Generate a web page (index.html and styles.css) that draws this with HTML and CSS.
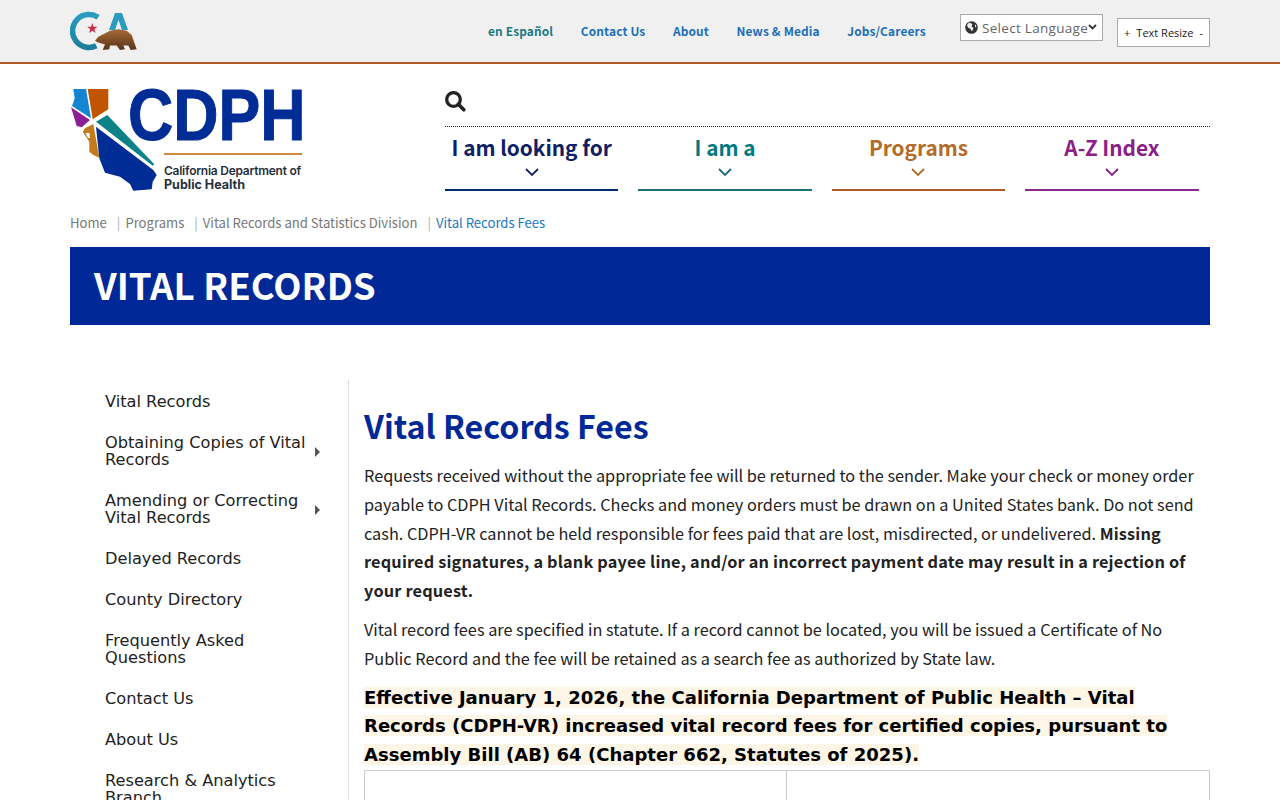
FILE: index.html
```html
<!DOCTYPE html>
<html lang="en">
<head>
<meta charset="utf-8">
<title>Vital Records Fees</title>
<link rel="stylesheet" href="styles.css">
</head>
<body>
<header class="topbar">
  <div class="wrap topbar-in">
    <a class="ca-logo" href="#" aria-label="CA">
      <svg width="68" height="40" viewBox="0 0 68 40">
        <defs>
          <linearGradient id="bear" x1="0" y1="0" x2="0" y2="1"><stop offset="0" stop-color="#a66a38"/><stop offset="1" stop-color="#5a3418"/></linearGradient>
          <linearGradient id="cblue" x1="0" y1="0" x2="0" y2="1"><stop offset="0" stop-color="#2b9cc0"/><stop offset="1" stop-color="#1c7f9c"/></linearGradient>
        </defs>
        <path d="M28.200 6.300A16.500 16.500 0 1 0 26.300 34.800" fill="none" stroke="url(#cblue)" stroke-width="5.500"/>
        <path d="M45 2h7l6 17h-6l-3.500-10-3.500 10h-6z" fill="#2b9cc0"/>
        <path d="M22.300 12l1.300 3.700 3.800.1-3 2.400 1.100 3.700-3.200-2.200-3.200 2.200 1.100-3.700-3-2.400 3.800-.1z" fill="#c8304a"/>
        <path d="M25 29.700 28.300 25.700 33.300 23.300 40 19.700 48.300 18.300 56.700 19.700 61.700 24 64 30.700 66.700 38.300 60.700 39 58.300 34.500 53.300 34.500 55 38.300 50 39 46.700 34.500 40 34.500 39.300 38.300 32.700 39 35 33.500 28.300 31.500z" fill="url(#bear)"/>
      </svg>
    </a>
    <nav class="utility">
      <a class="es" href="#">en Español</a>
      <a href="#">Contact Us</a>
      <a href="#">About</a>
      <a href="#">News &amp; Media</a>
      <a href="#">Jobs/Careers</a>
    </nav>
    <div class="lang">
      <svg class="globe" width="13" height="13" viewBox="0 0 13 13"><circle cx="6.500" cy="6.500" r="6.300" fill="#333"/><path d="M4 1.500 7.500 3 6.500 5.500 8.500 7 7 10.500 5.500 8 3 6.500 2 4zM10 3l1.500 2.500-1.500 1z" fill="#f0f0f0"/></svg>
      <span class="lang-t">Select Language</span>
      <svg class="lang-c" width="9" height="6" viewBox="0 0 9 6"><path d="M1 1l3.500 3.500L8 1" fill="none" stroke="#333" stroke-width="1.800"/></svg>
    </div>
    <div class="resize"><span>+</span><span class="resize-t">Text Resize</span><span>-</span></div>
  </div>
</header>

<div class="wrap brand">
  <a class="cdph" href="#">
    <svg class="map" width="88" height="106" viewBox="0 0 88 106">
      <path d="M3.300 2H16L21 31.300 2 19 4.700 11.300z" fill="#1485d2"/>
      <path d="M17.700 2H38.300V22.300L22.700 32.300z" fill="#c05400"/>
      <path d="M1 20.300 20 33 11.700 40.300 6.700 39z" fill="#8b1f96"/>
      <path d="M26 34.700 37.300 28 84.300 77.300 82.700 78.700z" fill="#0c8288"/>
      <path d="M23.300 37 29.300 70.700 23.300 68 19.300 64.700 19.300 54.700 12.700 44.700 15 41.300z" fill="#c57a1a"/>
      <path d="M15.500 46h4l.5 5h-2z" fill="#fff"/>
      <path d="M26 39.700 83.300 83 86.700 88 82.700 94.700 81.700 102.300 63.300 103.700 60 97 50 89.700 35 85.700 29.300 71.300z" fill="#002c96"/>
    </svg>
    <div class="cdph-text">
      <div class="cdph-name">CDPH</div>
      <div class="cdph-rule"></div>
      <div class="cdph-full">California Department of</div>
      <div class="cdph-full2">Public Health</div>
    </div>
  </a>
  <div class="mainnav">
    <div class="searchrow">
      <svg width="21" height="21" viewBox="0 0 21 21"><circle cx="8.500" cy="8.500" r="6.800" fill="none" stroke="#222" stroke-width="3.300"/><path d="M13.300 13.300 18.800 18.800" stroke="#222" stroke-width="3.600" stroke-linecap="round"/></svg>
    </div>
    <div class="tabs">
      <a class="tab tab-navy" href="#"><span class="tab-t">I am looking for</span><svg width="14" height="9" viewBox="0 0 14 9"><path d="M1 1l6 6 6-6" fill="none" stroke="currentColor" stroke-width="1.800"/></svg></a>
      <a class="tab tab-teal" href="#"><span class="tab-t">I am a</span><svg width="14" height="9" viewBox="0 0 14 9"><path d="M1 1l6 6 6-6" fill="none" stroke="currentColor" stroke-width="1.800"/></svg></a>
      <a class="tab tab-orange" href="#"><span class="tab-t">Programs</span><svg width="14" height="9" viewBox="0 0 14 9"><path d="M1 1l6 6 6-6" fill="none" stroke="currentColor" stroke-width="1.800"/></svg></a>
      <a class="tab tab-purple" href="#"><span class="tab-t">A-Z Index</span><svg width="14" height="9" viewBox="0 0 14 9"><path d="M1 1l6 6 6-6" fill="none" stroke="currentColor" stroke-width="1.800"/></svg></a>
    </div>
  </div>
</div>

<div class="wrap crumbs">
  <a href="#">Home</a><i>|</i><a href="#">Programs</a><i>|</i><a href="#">Vital Records and Statistics Division</a><i>|</i><a class="cur" href="#">Vital Records Fees</a>
</div>

<div class="wrap">
  <div class="banner">VITAL RECORDS</div>
</div>

<div class="wrap cols">
  <aside class="side">
    <a href="#">Vital Records</a>
    <a class="more" href="#">Obtaining Copies of Vital Records</a>
    <a class="more" href="#">Amending or Correcting Vital Records</a>
    <a href="#">Delayed Records</a>
    <a href="#">County Directory</a>
    <a href="#">Frequently Asked Questions</a>
    <a href="#">Contact Us</a>
    <a href="#">About Us</a>
    <a href="#">Research &amp; Analytics Branch</a>
  </aside>
  <main class="content">
    <h1>Vital Records Fees</h1>
    <p>Requests received without the appropriate fee will be returned to the sender. Make your check or money order payable to CDPH Vital Records. Checks and money orders must be drawn on a United States bank. Do not send cash. CDPH-VR cannot be held responsible for fees paid that are lost, misdirected, or undelivered. <strong>Missing required signatures, a blank payee line, and/or an incorrect payment date may result in a rejection of your request.</strong></p>
    <p class="second">Vital record fees are specified in statute. If a record cannot be located, you will be issued a Certificate of No Public Record and the fee will be retained as a search fee as authorized by State law.</p>
    <p class="notice"><mark>Effective January 1, 2026, the California Department of Public Health – Vital Records (CDPH-VR) increased vital record fees for certified copies, pursuant to Assembly Bill (AB) 64 (Chapter 662, Statutes of 2025).</mark></p>
    <table class="fees"><tr><td class="fee-l"></td><td></td></tr></table>
  </main>
</div>
</body>
</html>
```
FILE: styles.css
```css
* { box-sizing: border-box; }
html, body { margin: 0; height: 800px; overflow: hidden; background: #fff; }
body { font-family: "Noto Sans CJK SC", "Noto Sans", sans-serif; color: #222; }
a { text-decoration: none; color: inherit; }
.wrap { width: 1140px; margin: 0 auto; }

.topbar { height: 64px; background: #f0f0f0; border-bottom: 2px solid #b05a27; }
.topbar-in { display: flex; align-items: flex-start; height: 62px; position: relative; }
.ca-logo { display: block; margin-top: 11px; height: 40px; }
.utility { display: flex; gap: 27.500px; margin-left: 350px; margin-top: 21px; font-size: 11.900px; letter-spacing: 0.150px; line-height: 19px; font-weight: 700; color: #1c6fb9; white-space: nowrap; }
.utility .es { color: #1a7a80; }
.lang { flex: none; width: 143px; height: 27px; margin-left: auto; margin-top: 14px; border: 1px solid #aaa; background: #fff; display: flex; align-items: center; padding-left: 4px; position: relative; color: #666; }
.lang-t { font-family: "Open Sans", sans-serif; font-size: 13.500px; letter-spacing: 0.300px; margin-left: 4px; white-space: nowrap; }
.lang-c { position: absolute; right: 5px; top: 9px; }
.resize { flex: none; width: 93px; height: 29px; margin-left: 14px; margin-top: 18px; border: 1px solid #aaa; background: #fff; display: flex; align-items: center; justify-content: space-between; padding: 0 6px; font-family: "Open Sans", sans-serif; font-size: 11px; color: #222; white-space: nowrap; }

.brand { display: flex; height: 127px; }
.cdph { display: flex; width: 375px; padding-top: 23px; }
.map { flex: none; }
.cdph-text { margin-left: -28px; }
.cdph-name { font-family: "Liberation Sans", sans-serif; font-weight: 700; font-size: 72px; line-height: 56px; color: #002c96; -webkit-text-stroke: 1px #002c96; height: 56px; width: 180px; margin-left: -2px; white-space: nowrap; transform: scaleX(0.87); transform-origin: 0 0; }
.cdph-rule { width: 138px; height: 2px; background: #d08a3c; margin: 10px 0 0 34px; }
.cdph-full, .cdph-full2 { font-family: "Inter", sans-serif; font-size: 12px; line-height: 14px; font-weight: 600; color: #26303c; margin-left: 34px; white-space: nowrap; letter-spacing: -0.250px; }
.cdph-full { margin-top: 9px; }
.cdph-full2 { font-size: 12.500px; font-weight: 700; letter-spacing: 0; }

.mainnav { width: 765px; }
.searchrow { height: 63px; padding-top: 27px; border-bottom: 1px dotted #222; }
.tabs { display: flex; gap: 20px; }
.tab { width: 173.400px; height: 64px; display: flex; flex-direction: column; align-items: center; border-bottom: 2px solid currentColor; font-weight: 700; }
.tab-t { font-size: 20.800px; line-height: 40px; height: 41px; white-space: nowrap; }
.tab-navy { color: #0f2066; border-color: #002c6f; }
.tab-navy svg { color: #12235f; }
.tab-teal { color: #007a80; border-color: #1a7278; }
.tab-teal svg { color: #1a6a78; }
.tab-orange { color: #b36c29; border-color: #b05a27; }
.tab-purple { color: #8b2089; border-color: #8b2a8d; }

.crumbs { height: 56px; padding-top: 22px; font-size: 13.100px; line-height: 20px; color: #777; white-space: nowrap; }
.crumbs i { font-style: normal; color: #aaa; margin: 0 5px 0 10px; font-size: 13px; }
.crumbs .cur { color: #1a78c2; }

.banner { height: 78px; background: #002896; color: #fff; font-size: 36.700px; font-weight: 700; line-height: 74px; padding-left: 24px; }

.cols { display: flex; margin-top: 55px; }
.side { width: 279px; flex: none; border-right: 1px solid #ddd; padding: 13px 0 0 35px; font-family: "DejaVu Sans", sans-serif; font-size: 16.200px; line-height: 17px; color: #222; height: 420px; }
.side a { display: block; margin-bottom: 24px; width: 209px; position: relative; }
.side .more { padding-right: 5px; }
.side .more::after { content: ""; position: absolute; right: -6px; top: 13px; border-left: 5px solid #555; border-top: 5px solid transparent; border-bottom: 5px solid transparent; }
.content { flex: 1; padding: 23px 0 0 15px; }
h1 { margin: 0 0 14px; font-size: 32.200px; line-height: 44px; font-weight: 700; color: #002896; }
.content p { margin: 0 0 10px; font-size: 16.280px; line-height: 28.800px; color: #222; }
.content p strong { letter-spacing: 0.180px; }
.content p.second { margin-bottom: 11px; }
.content p.notice { font-family: "DejaVu Sans", sans-serif; font-weight: 700; font-size: 18.050px; margin-bottom: 0; }
mark { background: #fdf5e6; color: #000; }
.fees { width: 100%; table-layout: fixed; border-collapse: collapse; }
.fees td { border: 1px solid #ccc; height: 60px; }
.fees .fee-l { width: 422px; }
```
